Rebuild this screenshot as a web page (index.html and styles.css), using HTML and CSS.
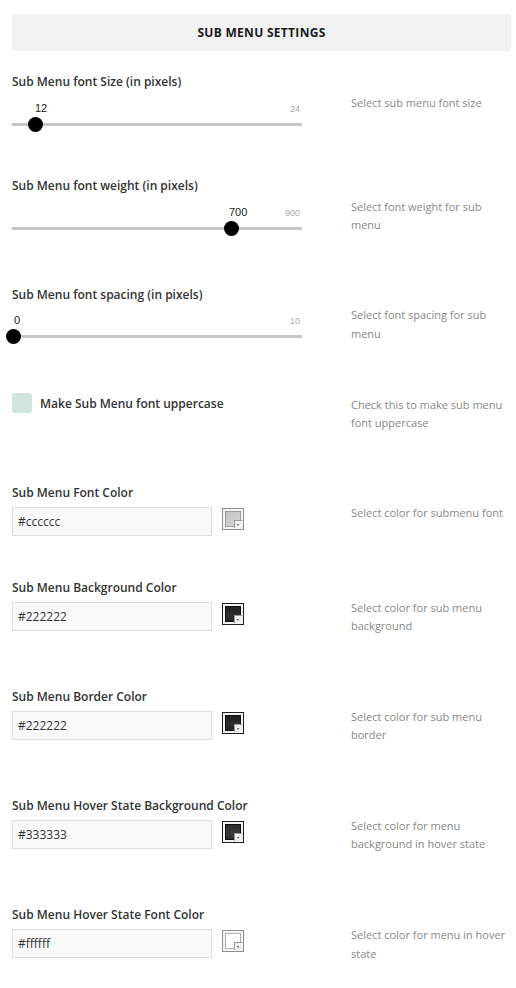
FILE: index.html
```html
<!DOCTYPE html>
<html>
<head>
<meta charset="utf-8">
<link rel="stylesheet" href="styles.css">
</head>
<body>
<div class="panel">
  <div class="header">SUB MENU SETTINGS</div>
  <div class="rows">

    <div class="row">
      <div class="field">
        <div class="label">Sub Menu font Size (in pixels)</div>
        <div class="slider">
          <span class="val" style="left:23px">12</span>
          <span class="max">24</span>
          <div class="track"></div>
          <span class="knob" style="left:16px"></span>
        </div>
      </div>
      <div class="desc">Select sub menu font size</div>
    </div>

    <div class="row">
      <div class="field">
        <div class="label">Sub Menu font weight (in pixels)</div>
        <div class="slider">
          <span class="val" style="left:217px">700</span>
          <span class="max">900</span>
          <div class="track"></div>
          <span class="knob" style="left:212px"></span>
        </div>
      </div>
      <div class="desc">Select font weight for sub menu</div>
    </div>

    <div class="row">
      <div class="field">
        <div class="label">Sub Menu font spacing (in pixels)</div>
        <div class="slider">
          <span class="val" style="left:2px">0</span>
          <span class="max">10</span>
          <div class="track"></div>
          <span class="knob" style="left:-6px"></span>
        </div>
      </div>
      <div class="desc">Select font spacing for sub menu</div>
    </div>

    <div class="row row-check">
      <div class="field check-field">
        <span class="checkbox"></span>
        <span class="label">Make Sub Menu font uppercase</span>
      </div>
      <div class="desc desc-inline">Check this to make sub menu font uppercase</div>
    </div>

    <div class="row row-color">
      <div class="field">
        <div class="label">Sub Menu Font Color</div>
        <div class="color-line">
          <div class="input">#cccccc</div>
          <div class="swatch"><div class="swatch-fill fill-light"></div><span class="swatch-corner"></span></div>
        </div>
      </div>
      <div class="desc">Select color for submenu font</div>
    </div>

    <div class="row row-color">
      <div class="field">
        <div class="label">Sub Menu Background Color</div>
        <div class="color-line">
          <div class="input">#222222</div>
          <div class="swatch swatch-dark"><div class="swatch-fill fill-dark"></div><span class="swatch-corner"></span></div>
        </div>
      </div>
      <div class="desc">Select color for sub menu background</div>
    </div>

    <div class="row row-color">
      <div class="field">
        <div class="label">Sub Menu Border Color</div>
        <div class="color-line">
          <div class="input">#222222</div>
          <div class="swatch swatch-dark"><div class="swatch-fill fill-dark"></div><span class="swatch-corner"></span></div>
        </div>
      </div>
      <div class="desc">Select color for sub menu border</div>
    </div>

    <div class="row row-color">
      <div class="field">
        <div class="label">Sub Menu Hover State Background Color</div>
        <div class="color-line">
          <div class="input">#333333</div>
          <div class="swatch swatch-dark"><div class="swatch-fill fill-mid"></div><span class="swatch-corner"></span></div>
        </div>
      </div>
      <div class="desc">Select color for menu background in hover state</div>
    </div>

    <div class="row row-color">
      <div class="field">
        <div class="label">Sub Menu Hover State Font Color</div>
        <div class="color-line">
          <div class="input">#ffffff</div>
          <div class="swatch"><div class="swatch-fill fill-white"></div><span class="swatch-corner"></span></div>
        </div>
      </div>
      <div class="desc">Select color for menu in hover state</div>
    </div>

  </div>
</div>
</body>
</html>
```
FILE: styles.css
```css
html, body {
  margin: 0;
  padding: 0;
  background: #ffffff;
}
body {
  font-family: "Open Sans", "Liberation Sans", sans-serif;
  color: #333333;
}
.panel {
  padding: 14px 5px 20px 12px;
}
.header {
  height: 37px;
  background: #f2f2f2;
  display: flex;
  align-items: center;
  justify-content: center;
  font-size: 12px;
  font-weight: 700;
  color: #1a1a1a;
  letter-spacing: 0.3px;
}
.rows {
  margin-top: 23px;
  display: flex;
  flex-direction: column;
  gap: 44px;
}
.row {
  display: grid;
  grid-template-columns: 290px 1fr;
  column-gap: 49px;
  align-items: start;
}
.row-check {
  margin-top: -2px;
}
.label {
  font-size: 12px;
  line-height: 16px;
  font-weight: 600;
  color: #333333;
}
.desc {
  font-size: 11px;
  line-height: 18.5px;
  color: #888888;
  padding-top: 19.5px;
  padding-bottom: 8px;
  padding-right: 2px;
}
.row-color .desc {
  padding-top: 19px;
  padding-bottom: 9.2px;
}
.desc-inline {
  padding-top: 2.5px;
}
/* slider */
.slider {
  position: relative;
  height: 44px;
}
.track {
  position: absolute;
  left: 0;
  right: 0;
  top: 32.5px;
  height: 3px;
  background: #c6c6c6;
}
.knob {
  position: absolute;
  top: 26.5px;
  width: 15px;
  height: 15px;
  border-radius: 50%;
  background: #000000;
}
.val {
  position: absolute;
  top: 11.5px;
  font-family: "Liberation Sans", Arial, sans-serif;
  font-size: 11px;
  line-height: 12px;
  color: #222222;
}
.max {
  position: absolute;
  right: 2px;
  top: 13.5px;
  font-family: "Liberation Sans", Arial, sans-serif;
  font-size: 9px;
  line-height: 10px;
  color: #aaaaaa;
}
/* checkbox */
.check-field {
  display: flex;
  align-items: center;
  gap: 8px;
}
.checkbox {
  width: 20px;
  height: 20px;
  border-radius: 3px;
  background: #cfe5dd;
  flex: none;
}
.check-field .label {
  padding-top: 1px;
}
/* color */
.color-line {
  display: flex;
  align-items: flex-start;
  gap: 10px;
  margin-top: 6px;
}
.input {
  box-sizing: border-box;
  width: 200px;
  height: 29px;
  border: 1px solid #dddddd;
  background: #f9f9f9;
  font-size: 12px;
  line-height: 27px;
  padding-left: 5px;
  color: #333333;
}
.swatch {
  position: relative;
  box-sizing: border-box;
  width: 22px;
  height: 22px;
  margin-top: 1px;
  border: 1px solid #8f8f8f;
  background: #f4f4f4;
  padding: 2px;
}
.swatch-dark {
  border-color: #1e1e1e;
  background: #f2f2f2;
}
.swatch-fill {
  box-sizing: border-box;
  width: 100%;
  height: 100%;
  border: 1px solid #9a9a9a;
}
.fill-light {
  background: linear-gradient(135deg, #c4c4c4 0%, #d6d6d6 100%);
}
.fill-dark {
  border-color: #111111;
  background: linear-gradient(180deg, #1e1e1e 0%, #2e2e2e 60%, #222222 100%);
}
.fill-mid {
  border-color: #111111;
  background: linear-gradient(180deg, #2a2a2a 0%, #3a3a3a 60%, #2c2c2c 100%);
}
.fill-white {
  border-color: #b0b0b0;
  background: #ffffff;
}
.swatch-corner {
  position: absolute;
  right: 1px;
  bottom: 1px;
  width: 7px;
  height: 7px;
  background: #f0f0f0;
  border-top: 1px solid #9a9a9a;
  border-left: 1px solid #9a9a9a;
}
.swatch-corner::after {
  content: "";
  position: absolute;
  left: 2px;
  top: 3px;
  width: 0;
  height: 0;
  border-left: 1.5px solid transparent;
  border-right: 1.5px solid transparent;
  border-top: 2px solid #444444;
}
```
